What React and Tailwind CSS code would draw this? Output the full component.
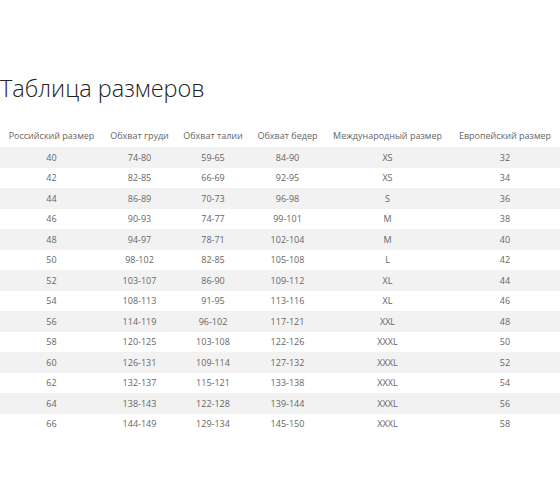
import React from 'react';

const rows = [
  ['40', '74-80', '59-65', '84-90', 'XS', '32'],
  ['42', '82-85', '66-69', '92-95', 'XS', '34'],
  ['44', '86-89', '70-73', '96-98', 'S', '36'],
  ['46', '90-93', '74-77', '99-101', 'M', '38'],
  ['48', '94-97', '78-71', '102-104', 'M', '40'],
  ['50', '98-102', '82-85', '105-108', 'L', '42'],
  ['52', '103-107', '86-90', '109-112', 'XL', '44'],
  ['54', '108-113', '91-95', '113-116', 'XL', '46'],
  ['56', '114-119', '96-102', '117-121', 'XXL', '48'],
  ['58', '120-125', '103-108', '122-126', 'XXXL', '50'],
  ['60', '126-131', '109-114', '127-132', 'XXXL', '52'],
  ['62', '132-137', '115-121', '133-138', 'XXXL', '54'],
  ['64', '138-143', '122-128', '139-144', 'XXXL', '56'],
  ['66', '144-149', '129-134', '145-150', 'XXXL', '58'],
];

const headers = [
  'Российский размер',
  'Обхват груди',
  'Обхват талии',
  'Обхват бедер',
  'Международный размер',
  'Европейский размер',
];

const widths = ['w-[103px]', 'w-[73px]', 'w-[74px]', 'w-[75px]', 'w-[125px]', 'w-[110px]'];

export default function App() {
  return (
    <div className="w-[560px] h-[504px] bg-white text-[#555] font-['Open_Sans',sans-serif] overflow-hidden">
      <h1 className="pt-[73px] text-[23.5px] leading-[31px] font-light text-[#222]">
        Таблица размеров
      </h1>
      <table className="mt-[21px] w-[560px] table-fixed border-collapse text-[9px]">
        <thead>
          <tr className="h-[22px]">
            {headers.map((h, i) => (
              <th key={h} className={`${widths[i]} font-normal text-[#666] text-center whitespace-nowrap`}>
                {h}
              </th>
            ))}
          </tr>
        </thead>
        <tbody>
          {rows.map((r, i) => (
            <tr key={r[0]} className={`h-[20.5px] ${i % 2 === 0 ? 'bg-[#f2f2f2]' : 'bg-white'}`}>
              {r.map((c, j) => (
                <td key={j} className="text-center text-[#666] p-0">
                  {c}
                </td>
              ))}
            </tr>
          ))}
        </tbody>
      </table>
    </div>
  );
}
